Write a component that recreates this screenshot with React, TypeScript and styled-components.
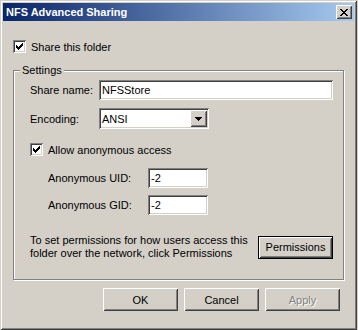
import React from 'react'
import styled, { createGlobalStyle } from 'styled-components'

const GlobalStyle = createGlobalStyle`
  body {
    margin: 0;
    background: #d4d0c8;
  }
  * {
    box-sizing: border-box;
  }
`

const raised = `
  box-shadow: inset 1px 1px #fff, inset -1px -1px #404040,
    inset 2px 2px #d4d0c8, inset -2px -2px #808080;
`

const sunken = `
  box-shadow: inset 1px 1px #808080, inset -1px -1px #fff,
    inset 2px 2px #404040, inset -2px -2px #d4d0c8;
`

const Window = styled.div`
  width: 357px;
  height: 330px;
  padding: 3px;
  background: #d4d0c8;
  box-shadow: inset 1px 1px #d4d0c8, inset -1px -1px #404040,
    inset 2px 2px #fff, inset -2px -2px #808080;
  font-family: 'Liberation Sans', Arial, sans-serif;
  font-size: 11px;
  color: #000;
  display: flex;
  flex-direction: column;
`

const TitleBar = styled.div`
  height: 18px;
  display: flex;
  align-items: center;
  padding: 0 2px 0 3px;
  background: linear-gradient(to right, #0a246a, #a6caf0);
`

const Title = styled.span`
  flex: 1;
  color: #fff;
  font-weight: bold;
  font-size: 11px;
`

const CloseButton = styled.div`
  width: 16px;
  height: 14px;
  background: #d4d0c8;
  display: flex;
  align-items: center;
  justify-content: center;
  ${raised}
`

const Body = styled.div`
  padding: 0 10px;
  display: flex;
  flex-direction: column;
`

const CheckRow = styled.label<{ $mt: number }>`
  margin-top: ${(p) => p.$mt}px;
  display: flex;
  align-items: center;
  gap: 5px;
  height: 13px;
`

const Box = styled.span`
  width: 13px;
  height: 13px;
  flex: none;
  background: #fff;
  display: block;
  ${sunken}
`

const Group = styled.div`
  position: relative;
  margin-top: 17px;
  border: 1px solid #808080;
  box-shadow: inset 1px 1px #fff, 1px 1px #fff;
  padding: 9px 10px 19px 16px;
  display: flex;
  flex-direction: column;
`

const Caption = styled.span`
  position: absolute;
  top: -8px;
  left: 6px;
  padding: 0 2px;
  line-height: 14px;
  background: #d4d0c8;
`

const FieldRow = styled.div<{ $mt: number; $indent?: number }>`
  margin-top: ${(p) => p.$mt}px;
  padding-left: ${(p) => p.$indent ?? 0}px;
  display: flex;
  align-items: center;
`

const Label = styled.span<{ $w: number }>`
  width: ${(p) => p.$w}px;
  flex: none;
`

const TextInput = styled.input<{ $w?: number }>`
  ${(p) => (p.$w ? `width: ${p.$w}px;` : 'flex: 1; min-width: 0;')}
  height: 20px;
  border: none;
  padding: 0 3px;
  margin: 0;
  background: #fff;
  font: inherit;
  color: #000;
  outline: none;
  ${sunken}
`

const Combo = styled.div`
  width: 110px;
  height: 21px;
  padding: 2px;
  background: #fff;
  display: flex;
  align-items: center;
  ${sunken}
`

const ComboValue = styled.span`
  flex: 1;
  padding-left: 1px;
`

const ComboButton = styled.span`
  width: 17px;
  height: 17px;
  background: #d4d0c8;
  display: flex;
  align-items: center;
  justify-content: center;
  ${raised}
`

const InfoRow = styled.div`
  margin-top: 19px;
  display: flex;
  align-items: center;
  justify-content: space-between;
`

const InfoText = styled.p`
  margin: 0;
  line-height: 13px;
  white-space: nowrap;
`

const Button = styled.button<{ $default?: boolean }>`
  width: 75px;
  height: 23px;
  padding: 0;
  margin: 0;
  font: inherit;
  color: #000;
  background: #d4d0c8;
  border: ${(p) => (p.$default ? '1px solid #000' : 'none')};
  ${raised}
  &:disabled {
    color: #808080;
    text-shadow: 1px 1px #fff;
  }
`

const ButtonRow = styled.div`
  margin-top: 8px;
  padding-right: 4px;
  display: flex;
  justify-content: flex-end;
  gap: 6px;
`

const checkRuns: [number, number, number][] = [
  [0, 6, 1],
  [1, 5, 2],
  [2, 0, 1],
  [2, 4, 3],
  [3, 0, 2],
  [3, 3, 3],
  [4, 0, 5],
  [5, 1, 3],
  [6, 2, 1],
]

const Check = () => (
  <svg width="13" height="13" viewBox="0 0 13 13" shapeRendering="crispEdges">
    {checkRuns.map(([y, x, w], i) => (
      <rect key={i} x={x + 3} y={y + 3} width={w} height={1} fill="#000" />
    ))}
  </svg>
)

const Checkbox = () => (
  <Box>
    <Check />
  </Box>
)

const CloseGlyph = () => (
  <svg width="8" height="7" viewBox="0 0 8 7" shapeRendering="crispEdges">
    <path
      d="M0 0h2v1h-2zM6 0h2v1h-2zM1 1h2v1h-2zM5 1h2v1h-2zM2 2h4v1h-4zM3 3h2v1h-2zM2 4h4v1h-4zM1 5h2v1h-2zM5 5h2v1h-2zM0 6h2v1h-2zM6 6h2v1h-2z"
      fill="#000"
    />
  </svg>
)

const DownArrow = () => (
  <svg width="7" height="4" viewBox="0 0 7 4" shapeRendering="crispEdges">
    <path d="M0 0h7v1h-7zM1 1h5v1h-5zM2 2h3v1h-3zM3 3h1v1h-1z" fill="#000" />
  </svg>
)

export default function App() {
  return (
    <>
      <GlobalStyle />
      <Window>
        <TitleBar>
          <Title>NFS Advanced Sharing</Title>
          <CloseButton>
            <CloseGlyph />
          </CloseButton>
        </TitleBar>
        <Body>
          <CheckRow $mt={19}>
            <Checkbox />
            <span>Share this folder</span>
          </CheckRow>
          <Group>
            <Caption>Settings</Caption>
            <FieldRow $mt={0}>
              <Label $w={69}>Share name:</Label>
              <TextInput defaultValue="NFSStore" />
            </FieldRow>
            <FieldRow $mt={8}>
              <Label $w={69}>Encoding:</Label>
              <Combo>
                <ComboValue>ANSI</ComboValue>
                <ComboButton>
                  <DownArrow />
                </ComboButton>
              </Combo>
            </FieldRow>
            <CheckRow $mt={14}>
              <Checkbox />
              <span>Allow anonymous access</span>
            </CheckRow>
            <FieldRow $mt={12} $indent={18}>
              <Label $w={100}>Anonymous UID:</Label>
              <TextInput $w={60} defaultValue="-2" />
            </FieldRow>
            <FieldRow $mt={7} $indent={18}>
              <Label $w={100}>Anonymous GID:</Label>
              <TextInput $w={60} defaultValue="-2" />
            </FieldRow>
            <InfoRow>
              <InfoText>
                To set permissions for how users access this
                <br />
                folder over the network, click Permissions
              </InfoText>
              <Button $default>Permissions</Button>
            </InfoRow>
          </Group>
          <ButtonRow>
            <Button>OK</Button>
            <Button>Cancel</Button>
            <Button disabled>Apply</Button>
          </ButtonRow>
        </Body>
      </Window>
    </>
  )
}
